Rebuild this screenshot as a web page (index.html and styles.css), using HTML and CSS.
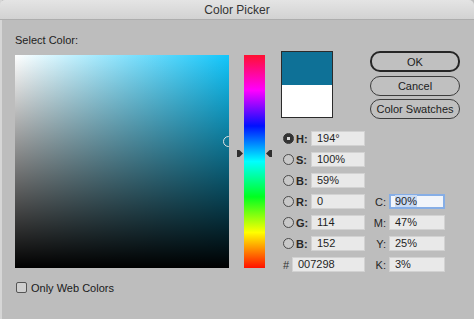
FILE: index.html
```html
<!DOCTYPE html>
<html lang="en">

<head>
    <meta charset="UTF-8">
    <meta name="viewport" content="width=device-width, initial-scale=1.0">
    <title>Color Picker</title>

    <link rel="stylesheet" href="styles.css">

</head>
<body>
    <div class="window">
        <div class="titlebar">Color Picker</div>
        <div class="content">
            <div class="caption">Select Color:</div>
            <div class="main">
                <div class="field"><span class="ring"></span></div>
                <div class="hue">
                    <span class="arrow arrow-left"></span>
                    <span class="arrow arrow-right"></span>
                </div>
                <div class="side">
                    <div class="top">
                        <div class="swatch">
                            <div class="swatch-new"></div>
                            <div class="swatch-old"></div>
                        </div>
                        <div class="actions">
                            <button class="btn btn-default">OK</button>
                            <button class="btn">Cancel</button>
                            <button class="btn">Color Swatches</button>
                        </div>
                    </div>
                    <div class="values">
                        <span class="radio checked"></span><span class="key">H:</span><div class="box">194°</div><span></span><span></span>
                        <span class="radio"></span><span class="key">S:</span><div class="box">100%</div><span></span><span></span>
                        <span class="radio"></span><span class="key">B:</span><div class="box">59%</div><span></span><span></span>
                        <span class="radio"></span><span class="key">R:</span><div class="box">0</div><span class="cmyk">C:</span><div class="box focus"><span class="sel">90%</span></div>
                        <span class="radio"></span><span class="key">G:</span><div class="box">114</div><span class="cmyk">M:</span><div class="box">47%</div>
                        <span class="radio"></span><span class="key">B:</span><div class="box">152</div><span class="cmyk">Y:</span><div class="box">25%</div>
                        <span class="hash">#</span><div class="box hex">007298</div><span class="cmyk">K:</span><div class="box">3%</div>
                    </div>
                </div>
            </div>
            <div class="web-only"><span class="check"></span>Only Web Colors</div>
        </div>
    </div>
</body>
</html>
```

FILE: styles.css
```css
body {
    margin: 0;
    background-color: #bdbdbd;
    font-family: "Liberation Sans", Arial, sans-serif;
    font-size: 11px;
    color: #1c1c1c;
}

.window {
    width: 474px;
    height: 319px;
    background-color: #bdbdbd;
    box-shadow: inset 2px 0 #d6d6d6;
    display: flex;
    flex-direction: column;
}

.titlebar {
    height: 19px;
    line-height: 20px;
    text-align: center;
    font-size: 12px;
    color: #333;
    background: linear-gradient(#e4e4e4, #d2d2d2);
    border-bottom: 1px solid #adadad;
    border-top-left-radius: 5px;
    border-top-right-radius: 5px;
}

.content {
    padding: 14px 0 0 15px;
}

.caption {
    line-height: 13px;
    color: #222;
}

.main {
    display: flex;
    align-items: flex-start;
    margin-top: 4px;
}

/* saturation / brightness square */
.field {
    position: relative;
    overflow: hidden;
    width: 214px;
    height: 213px;
    margin-top: 4px;
    background:
        linear-gradient(to top, #000, rgba(0, 0, 0, 0)),
        linear-gradient(to right, #fff, #12c6fb);
}

.ring {
    position: absolute;
    left: 208px;
    top: 81px;
    width: 9px;
    height: 9px;
    border: 1.5px solid #e4e4e4;
    border-radius: 50%;
}

.hue {
    position: relative;
    width: 21px;
    height: 213px;
    margin: 4px 0 0 15px;
    background: linear-gradient(#ff1030, #ff00ff 16.6%, #0010ff 33.3%, #00ffff 50%, #00ff20 66.6%, #ffff00 83.3%, #ff1000);
}

.arrow {
    position: absolute;
    top: 95px;
    width: 6px;
    height: 7px;
    background-color: #2e2e2e;
}

.arrow-left {
    left: -7px;
    clip-path: polygon(0 0, 40% 0, 100% 50%, 40% 100%, 0 100%);
}

.arrow-right {
    right: -7px;
    clip-path: polygon(0 50%, 60% 0, 100% 0, 100% 100%, 60% 100%);
}

.side {
    margin-left: 16px;
}

.top {
    display: flex;
    align-items: flex-start;
}

.swatch {
    box-sizing: border-box;
    width: 52px;
    height: 67px;
    border: 1px solid #2b2b2b;
    display: flex;
    flex-direction: column;
}

.swatch-new {
    flex: 1;
    background-color: #0e7197;
}

.swatch-old {
    flex: 1;
    background-color: #fff;
}

.actions {
    display: flex;
    flex-direction: column;
    margin-left: 37px;
    width: 90px;
}

.btn {
    box-sizing: border-box;
    height: 20px;
    margin-top: 3px;
    padding: 0;
    font-family: "Liberation Sans", Arial, sans-serif;
    font-size: 11px;
    color: #1c1c1c;
    background-color: #c0c0c0;
    border: 1px solid #3c3c3c;
    border-radius: 10px;
}

.btn-default {
    height: 21px;
    margin-top: 0;
    margin-bottom: 1px;
    border: 2px solid #262626;
}

.values {
    display: grid;
    grid-template-columns: 13px 17px 54px 24px 56px;
    grid-auto-rows: 15px;
    row-gap: 6px;
    margin-top: 12px;
    align-items: center;
}

.radio {
    justify-self: end;
    box-sizing: border-box;
    width: 11px;
    height: 11px;
    border: 1px solid #4a4a4a;
    border-radius: 50%;
    background-color: #c8c8c8;
}

.radio.checked {
    background: radial-gradient(circle, #d8d8d8 0 1.5px, #333 2px);
    border-color: #333;
}

.key {
    padding-left: 2px;
    font-weight: bold;
    color: #262626;
}

.hash {
    padding-left: 2px;
    color: #333;
}

.cmyk {
    text-align: right;
    padding-right: 3px;
    color: #262626;
}

.box {
    box-sizing: border-box;
    height: 15px;
    line-height: 13px;
    padding-left: 5px;
    background-color: #e9e9e9;
    border: 1px solid #d2d2d2;
    color: #1f1f1f;
}

.hex {
    grid-column: span 2;
    margin-left: -2px;
}

.focus {
    border: 2px solid #86aee6;
    line-height: 11px;
    padding-left: 4px;
    background-color: #f2f5fa;
}

.sel {
    background-color: #c9daf3;
}

.web-only {
    display: flex;
    align-items: center;
    margin-top: 10px;
    height: 11px;
    color: #1a1a1a;
}

.check {
    box-sizing: border-box;
    width: 11px;
    height: 11px;
    margin: 0 4px 0 1px;
    border: 1px solid #555;
    border-radius: 2px;
    background-color: #cfcfcf;
}
```
